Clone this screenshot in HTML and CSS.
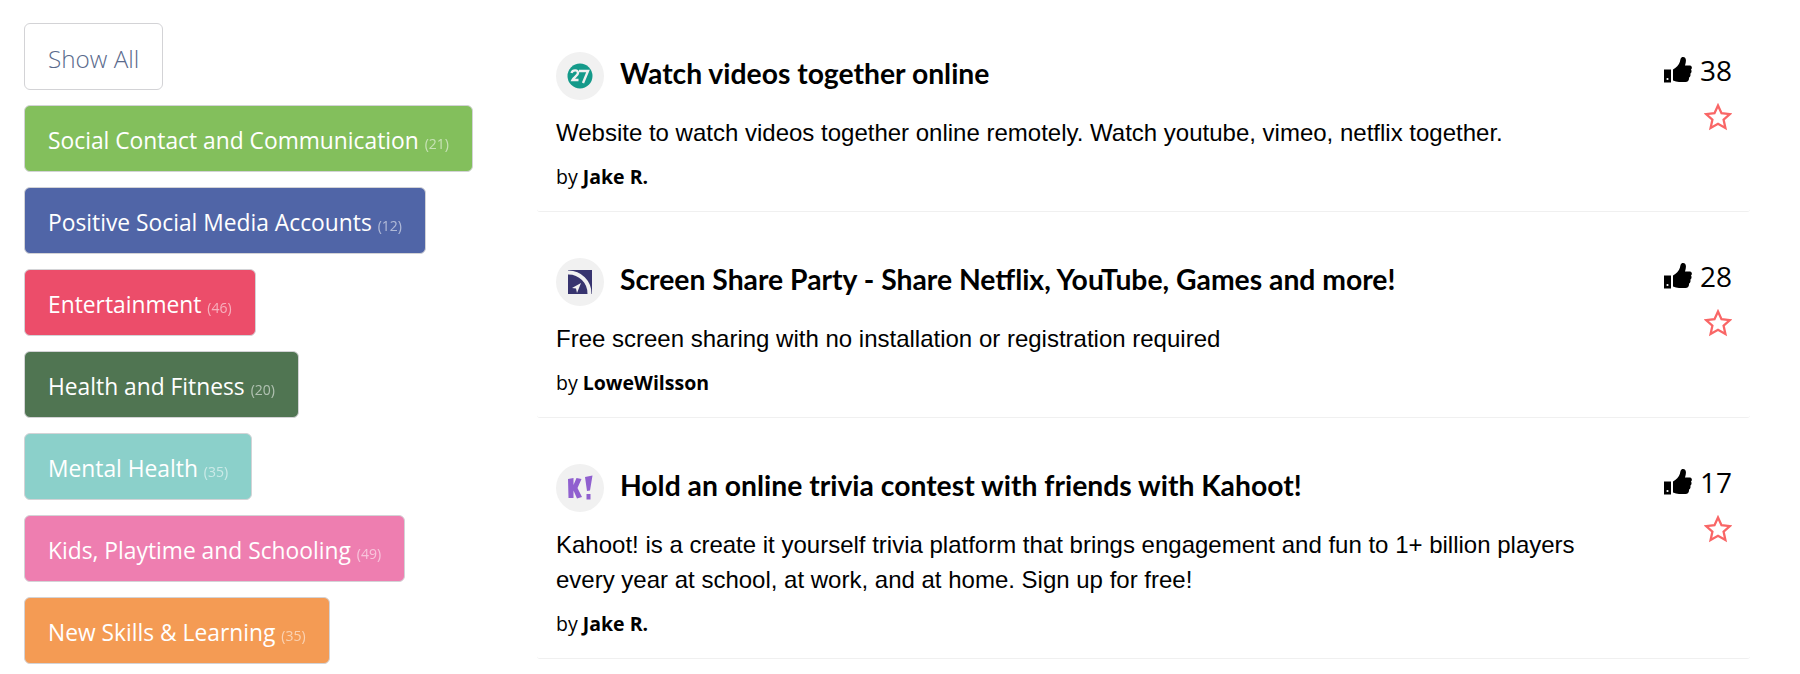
FILE: index.html
```html
<!DOCTYPE html>
<html lang="en">
<head>
<meta charset="utf-8">
<title>Resources</title>
<link rel="stylesheet" href="styles.css">
</head>
<body>
<div class="page">
  <aside class="sidebar">
    <a class="chip chip-all">Show All</a>
    <a class="chip c-green">Social Contact and Communication <small>(21)</small></a>
    <a class="chip c-blue">Positive Social Media Accounts <small>(12)</small></a>
    <a class="chip c-red">Entertainment <small>(46)</small></a>
    <a class="chip c-forest">Health and Fitness <small>(20)</small></a>
    <a class="chip c-teal">Mental Health <small>(35)</small></a>
    <a class="chip c-pink">Kids, Playtime and Schooling <small>(49)</small></a>
    <a class="chip c-orange">New Skills &amp; Learning <small>(35)</small></a>
  </aside>
  <main class="list">
    <article class="card">
      <div class="card-main">
        <div class="head">
          <span class="logo">
            <svg viewBox="0 0 48 48" width="48" height="48"><circle cx="24" cy="24" r="12.5" fill="#149a8a"/><path d="M15.500 21c1-3.500 6.500-3.500 6.500 0 0 2.500-4 4-5.500 7h6M23 19h9l-5 12" fill="none" stroke="#f1f1f1" stroke-width="2.400"/></svg>
          </span>
          <h2>Watch videos together online</h2>
        </div>
        <p class="desc">Website to watch videos together online remotely. Watch youtube, vimeo, netflix together.</p>
        <p class="by">by <b>Jake R.</b></p>
      </div>
      <div class="card-side">
        <div class="votes">
          <svg class="thumb" viewBox="0 0 28 26" width="28" height="26"><path d="M0 12.500h7v13H0z" fill="#000"/><path d="M9 12.500c3-1.500 6-4.500 7-8 .5-2 .5-4.500 3-4.500 3.500 0 3.500 4 2 8.500h5c2 0 2.500 3 1 4 1 1.500.5 3.500-.7 4.200.6 1.600-.1 3.300-1.300 3.800.3 2.500-1 4.500-3.500 4.500H15c-2 0-4-1-6-1.500z" fill="#000"/><circle cx="3.500" cy="22" r="1.100" fill="#fff"/></svg>
          <span>38</span>
        </div>
        <svg class="star" viewBox="0 0 28 28" width="28" height="28"><path d="M14 2.500l3.500 7.700 8.400.9-6.300 5.600 1.800 8.300L14 20.800 6.600 25l1.800-8.300-6.300-5.600 8.400-.9z" fill="none" stroke="#f96666" stroke-width="2.300"/></svg>
      </div>
    </article>
    <article class="card">
      <div class="card-main">
        <div class="head">
          <span class="logo">
            <svg viewBox="0 0 48 48" width="48" height="48"><path d="M12 12h24v24H12z" fill="#37346f"/><path d="M12 14.500A21 21 0 0 1 33.500 36" fill="none" stroke="#f1f1f1" stroke-width="4"/><path d="M25 25l-9 5 4 .5 1 4.500z" fill="#f1f1f1"/></svg>
          </span>
          <h2>Screen Share Party - Share Netflix, YouTube, Games and more!</h2>
        </div>
        <p class="desc">Free screen sharing with no installation or registration required</p>
        <p class="by">by <b>LoweWilsson</b></p>
      </div>
      <div class="card-side">
        <div class="votes">
          <svg class="thumb" viewBox="0 0 28 26" width="28" height="26"><path d="M0 12.500h7v13H0z" fill="#000"/><path d="M9 12.500c3-1.500 6-4.500 7-8 .5-2 .5-4.500 3-4.500 3.500 0 3.500 4 2 8.500h5c2 0 2.500 3 1 4 1 1.500.5 3.500-.7 4.200.6 1.600-.1 3.300-1.300 3.800.3 2.500-1 4.500-3.500 4.500H15c-2 0-4-1-6-1.500z" fill="#000"/><circle cx="3.500" cy="22" r="1.100" fill="#fff"/></svg>
          <span>28</span>
        </div>
        <svg class="star" viewBox="0 0 28 28" width="28" height="28"><path d="M14 2.500l3.500 7.700 8.400.9-6.300 5.600 1.800 8.300L14 20.800 6.600 25l1.800-8.300-6.300-5.600 8.400-.9z" fill="none" stroke="#f96666" stroke-width="2.300"/></svg>
      </div>
    </article>
    <article class="card">
      <div class="card-main">
        <div class="head">
          <span class="logo">
            <svg viewBox="0 0 48 48" width="48" height="48"><path d="M12 15l5.500-1v7l3-7 5 1-4 9 4.500 9-5 1.500-3.500-8v7.500h-5z" fill="#9060cf"/><path d="M29 13l7.500-1.500-2.500 15-3 .5zM30.500 30h4v5.500h-4z" fill="#9060cf"/></svg>
          </span>
          <h2>Hold an online trivia contest with friends with Kahoot!</h2>
        </div>
        <p class="desc">Kahoot! is a create it yourself trivia platform that brings engagement and fun to 1+ billion players every year at school, at work, and at home. Sign up for free!</p>
        <p class="by">by <b>Jake R.</b></p>
      </div>
      <div class="card-side">
        <div class="votes">
          <svg class="thumb" viewBox="0 0 28 26" width="28" height="26"><path d="M0 12.500h7v13H0z" fill="#000"/><path d="M9 12.500c3-1.500 6-4.500 7-8 .5-2 .5-4.500 3-4.500 3.500 0 3.500 4 2 8.500h5c2 0 2.500 3 1 4 1 1.500.5 3.500-.7 4.200.6 1.600-.1 3.300-1.300 3.800.3 2.500-1 4.500-3.500 4.500H15c-2 0-4-1-6-1.500z" fill="#000"/><circle cx="3.500" cy="22" r="1.100" fill="#fff"/></svg>
          <span>17</span>
        </div>
        <svg class="star" viewBox="0 0 28 28" width="28" height="28"><path d="M14 2.500l3.500 7.700 8.400.9-6.300 5.600 1.800 8.300L14 20.800 6.600 25l1.800-8.300-6.300-5.600 8.400-.9z" fill="none" stroke="#f96666" stroke-width="2.300"/></svg>
      </div>
    </article>
  </main>
</div>
</body>
</html>
```
FILE: styles.css
```css
* { box-sizing: border-box; }
html, body { margin: 0; height: 100%; overflow: hidden; background: #fff; }
.page { display: flex; padding: 23px 50px 0 24px; }
.sidebar { width: 513px; flex: none; display: flex; flex-direction: column; align-items: flex-start; gap: 15px; }
.chip {
  display: block;
  height: 67px;
  padding: 2px 23px 0;
  line-height: 65px;
  border: 1px solid #d3d3d6;
  border-radius: 6px;
  font-family: "Open Sans", sans-serif;
  font-size: 22.800px;
  color: #fff;
  white-space: nowrap;
}
.chip small { font-size: 14px; opacity: .55; }
.chip-all { color: #5a6a8c; background: #fff; font-weight: 300; font-size: 24.300px; }
.c-green { background: #83bf5c; }
.c-blue { background: #5065a7; }
.c-red { background: #ec4d6a; }
.c-forest { background: #507552; }
.c-teal { background: #8bd0ca; }
.c-pink { background: #ee7eb0; }
.c-orange { background: #f49b54; }
.list { flex: 1; min-width: 0; }
.card { display: flex; justify-content: space-between; margin-bottom: 17px; padding: 29px 18px 21px 19px; border-bottom: 1px solid #f0f0f0; border-radius: 0 0 3px 3px; }
.card-main { width: 1040px; }
.head { display: flex; align-items: center; gap: 16px; }
.logo { width: 48px; height: 48px; flex: none; background: #f1f1f1; border-radius: 50%; display: block; }
.logo svg { display: block; filter: blur(.4px); }
h2 { margin: 0 0 6px; font-family: Lato, sans-serif; font-weight: 700; font-size: 28.300px; line-height: 42px; color: #000; }
.desc { margin: 15px 0 0; font-family: "Liberation Sans", sans-serif; font-size: 24px; line-height: 35px; color: #000; }
.by { margin: 14px 0 0; font-family: "Open Sans", sans-serif; font-size: 19.500px; line-height: 26px; color: #000; }
.by b { font-weight: 700; }
.card-side { display: flex; flex-direction: column; align-items: flex-end; margin-top: -1px; }
.votes { display: flex; align-items: center; gap: 8px; font-family: "Open Sans", sans-serif; font-size: 28px; line-height: 38px; color: #000; }
.thumb { display: block; }
.star { display: block; margin-top: 14px; }
```
